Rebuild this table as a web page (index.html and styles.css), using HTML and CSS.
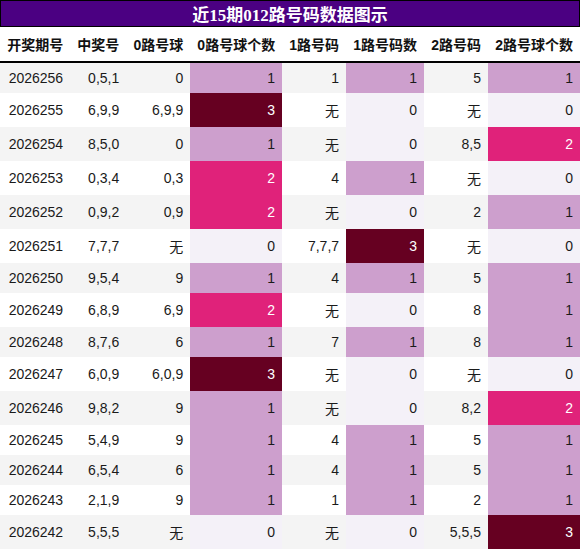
FILE: index.html
```html
<!DOCTYPE html>
<html lang="zh-CN">
<head>
  <meta charset="UTF-8">
  <meta name="viewport" content="width=device-width, initial-scale=1.0">
  <title>近15期012路号码数据图示</title>
  <link rel="stylesheet" href="styles.css">
</head>
<body>
  <div class="chart">
    <!-- Title -->
    <h1 class="chart-title">近<span class="num">15</span>期<span class="num">012</span>路号码数据图示</h1>

    <!-- Data Table -->
    <table class="route-table">
      <thead>
        <tr>
          <th>开奖期号</th>
          <th>中奖号</th>
          <th>0路号球</th>
          <th>0路号球个数</th>
          <th>1路号码</th>
          <th>1路号码数</th>
          <th>2路号码</th>
          <th>2路号球个数</th>
        </tr>
      </thead>
      <tbody>
        <tr>
          <td>2026256</td><td>0,5,1</td>
          <td>0</td><td class="count-1">1</td>
          <td>1</td><td class="count-1">1</td>
          <td>5</td><td class="count-1">1</td>
        </tr>
        <tr>
          <td>2026255</td><td>6,9,9</td>
          <td>6,9,9</td><td class="count-3">3</td>
          <td>无</td><td class="count-0">0</td>
          <td>无</td><td class="count-0">0</td>
        </tr>
        <tr>
          <td>2026254</td><td>8,5,0</td>
          <td>0</td><td class="count-1">1</td>
          <td>无</td><td class="count-0">0</td>
          <td>8,5</td><td class="count-2">2</td>
        </tr>
        <tr>
          <td>2026253</td><td>0,3,4</td>
          <td>0,3</td><td class="count-2">2</td>
          <td>4</td><td class="count-1">1</td>
          <td>无</td><td class="count-0">0</td>
        </tr>
        <tr>
          <td>2026252</td><td>0,9,2</td>
          <td>0,9</td><td class="count-2">2</td>
          <td>无</td><td class="count-0">0</td>
          <td>2</td><td class="count-1">1</td>
        </tr>
        <tr>
          <td>2026251</td><td>7,7,7</td>
          <td>无</td><td class="count-0">0</td>
          <td>7,7,7</td><td class="count-3">3</td>
          <td>无</td><td class="count-0">0</td>
        </tr>
        <tr>
          <td>2026250</td><td>9,5,4</td>
          <td>9</td><td class="count-1">1</td>
          <td>4</td><td class="count-1">1</td>
          <td>5</td><td class="count-1">1</td>
        </tr>
        <tr>
          <td>2026249</td><td>6,8,9</td>
          <td>6,9</td><td class="count-2">2</td>
          <td>无</td><td class="count-0">0</td>
          <td>8</td><td class="count-1">1</td>
        </tr>
        <tr>
          <td>2026248</td><td>8,7,6</td>
          <td>6</td><td class="count-1">1</td>
          <td>7</td><td class="count-1">1</td>
          <td>8</td><td class="count-1">1</td>
        </tr>
        <tr>
          <td>2026247</td><td>6,0,9</td>
          <td>6,0,9</td><td class="count-3">3</td>
          <td>无</td><td class="count-0">0</td>
          <td>无</td><td class="count-0">0</td>
        </tr>
        <tr>
          <td>2026246</td><td>9,8,2</td>
          <td>9</td><td class="count-1">1</td>
          <td>无</td><td class="count-0">0</td>
          <td>8,2</td><td class="count-2">2</td>
        </tr>
        <tr>
          <td>2026245</td><td>5,4,9</td>
          <td>9</td><td class="count-1">1</td>
          <td>4</td><td class="count-1">1</td>
          <td>5</td><td class="count-1">1</td>
        </tr>
        <tr>
          <td>2026244</td><td>6,5,4</td>
          <td>6</td><td class="count-1">1</td>
          <td>4</td><td class="count-1">1</td>
          <td>5</td><td class="count-1">1</td>
        </tr>
        <tr>
          <td>2026243</td><td>2,1,9</td>
          <td>9</td><td class="count-1">1</td>
          <td>1</td><td class="count-1">1</td>
          <td>2</td><td class="count-1">1</td>
        </tr>
        <tr>
          <td>2026242</td><td>5,5,5</td>
          <td>无</td><td class="count-0">0</td>
          <td>无</td><td class="count-0">0</td>
          <td>5,5,5</td><td class="count-3">3</td>
        </tr>
      </tbody>
    </table>
  </div>
</body>
</html>
```

FILE: styles.css
```css
:root {
  --title-bg: #4b0082;
  --row-alt: #f4f4f4;
  --count-0: #f4f1f8;
  --count-1: #cd9fcd;
  --count-2: #e0227a;
  --count-3: #660021;
  --text: #1a1a1a;
}

body {
  margin: 0;
  font-family: "Liberation Sans", "Noto Sans CJK SC", sans-serif;
  color: var(--text);
  background: #fff;
}

.chart {
  width: 580px;
}

/* Title */
.chart-title {
  margin: 0;
  background: var(--title-bg);
  border: 1px solid #000;
  color: #fff;
  font-family: "Liberation Serif", "Noto Sans CJK SC", serif;
  font-size: 17px;
  font-weight: bold;
  text-align: center;
}

/* Table */
.route-table {
  width: 100%;
  border-collapse: collapse;
  font-size: 14px;
}

.route-table th,
.route-table td {
  padding: 7px;
  text-align: right;
  white-space: nowrap;
}

.route-table th {
  font-weight: bold;
  color: #111;
  border-bottom: 2px solid #000;
}

.route-table tbody tr:nth-child(odd) {
  background: var(--row-alt);
}

/* Count cells */
.route-table td.count-0 {
  background: var(--count-0);
}

.route-table td.count-1 {
  background: var(--count-1);
}

.route-table td.count-2 {
  background: var(--count-2);
  color: #fff;
}

.route-table td.count-3 {
  background: var(--count-3);
  color: #fff;
}
```
